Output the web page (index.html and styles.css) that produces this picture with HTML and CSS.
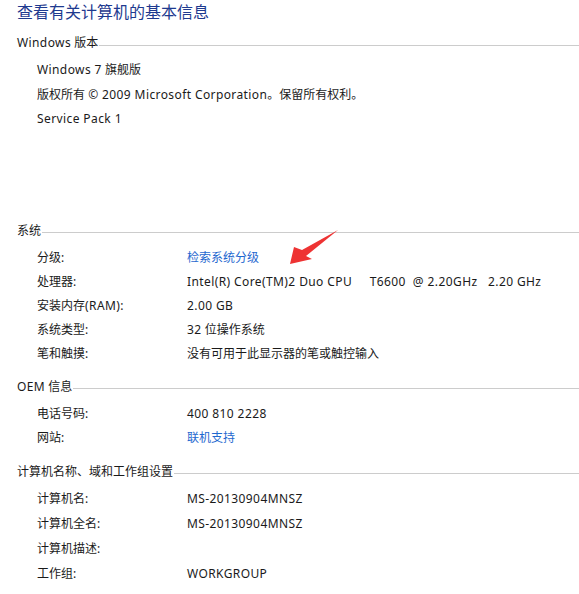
FILE: index.html
```html
<!DOCTYPE html>
<html lang="zh-CN">
<head>
<meta charset="utf-8">
<title>查看有关计算机的基本信息</title>
<link rel="stylesheet" href="styles.css">
</head>
<body>
<div class="page">
  <h1 class="title">查看有关计算机的基本信息</h1>

  <section class="sec sec-win">
    <div class="sec-head"><span class="sec-name"><span class="en">Windows</span> 版本</span><span class="rule"></span></div>
    <div class="rows">
      <div class="row"><span class="plain"><span class="en">Windows 7</span> 旗舰版</span></div>
      <div class="row"><span class="plain">版权所有 <span class="en">© 2009 Microsoft Corporation</span>。保留所有权利。</span></div>
      <div class="row"><span class="plain en">Service Pack 1</span></div>
    </div>
  </section>

  <section class="sec sec-sys">
    <div class="sec-head"><span class="sec-name">系统</span><span class="rule"></span></div>
    <div class="rows">
      <div class="row"><span class="label">分级:</span><a class="value link">检索系统分级</a></div>
      <div class="row"><span class="label">处理器:</span><span class="value pre en">Intel(R) Core(TM)2 Duo CPU     T6600  @ 2.20GHz   2.20 GHz</span></div>
      <div class="row"><span class="label">安装内存<span class="en">(RAM)</span>:</span><span class="value en">2.00 GB</span></div>
      <div class="row"><span class="label">系统类型:</span><span class="value"><span class="en">32</span> 位操作系统</span></div>
      <div class="row"><span class="label">笔和触摸:</span><span class="value">没有可用于此显示器的笔或触控输入</span></div>
    </div>
  </section>

  <section class="sec sec-oem">
    <div class="sec-head"><span class="sec-name"><span class="en">OEM</span> 信息</span><span class="rule"></span></div>
    <div class="rows">
      <div class="row"><span class="label">电话号码:</span><span class="value en">400 810 2228</span></div>
      <div class="row"><span class="label">网站:</span><a class="value link">联机支持</a></div>
    </div>
  </section>

  <section class="sec sec-name-grp">
    <div class="sec-head"><span class="sec-name">计算机名称、域和工作组设置</span><span class="rule"></span></div>
    <div class="rows rows-wide">
      <div class="row"><span class="label">计算机名:</span><span class="value en">MS-20130904MNSZ</span></div>
      <div class="row"><span class="label">计算机全名:</span><span class="value en">MS-20130904MNSZ</span></div>
      <div class="row"><span class="label">计算机描述:</span><span class="value"></span></div>
      <div class="row"><span class="label">工作组:</span><span class="value en">WORKGROUP</span></div>
    </div>
  </section>

  <svg class="arrow" width="60" height="45" viewBox="280 226 60 45" aria-hidden="true">
    <polygon points="290,264 294,247 302,250 338,230 306,256 312,259" fill="#ee3333"/>
  </svg>
</div>
</body>
</html>
```

FILE: styles.css
```css
html, body {
  margin: 0;
  padding: 0;
  background: #ffffff;
}

body {
  font-family: "Noto Sans", "Noto Sans CJK SC", sans-serif;
  font-size: 12px;
  color: #1a1a1a;
}

.page {
  position: relative;
  width: 579px;
  padding-left: 17px;
  box-sizing: border-box;
}

.title {
  margin: 0;
  font-family: "Noto Sans CJK SC", sans-serif;
  font-size: 16px;
  font-weight: normal;
  line-height: 23px;
  color: #1e3a8f;
}

.en {
  letter-spacing: 0.4px;
}

.sec-head {
  display: flex;
  align-items: center;
  height: 20px;
  line-height: 20px;
}

.sec-name {
  white-space: nowrap;
  color: #1a1a1a;
}

.rule {
  flex: 1;
  margin-left: 1px;
  margin-top: 4px;
  border-top: 1px solid #cccccc;
}

.rows {
  padding-left: 20px;
}

.row {
  display: flex;
  height: 24px;
  line-height: 24px;
  white-space: nowrap;
}

.rows-wide .row {
  height: 25px;
  line-height: 25px;
}

.label {
  width: 150px;
  flex: none;
}

.value {
  flex: none;
}

.pre {
  white-space: pre;
}

.link {
  color: #1f68cf;
  text-decoration: none;
}

.sec-win {
  margin-top: 10px;
}
.sec-win .rows {
  margin-top: 5px;
}
.sec-win .row {
  height: 24.5px;
  line-height: 24.5px;
}

.sec-sys {
  margin-top: 89px;
}
.sec-sys .rows {
  margin-top: 5px;
}

.sec-oem {
  margin-top: 11px;
}
.sec-oem .rows {
  margin-top: 5px;
}

.sec-name-grp {
  margin-top: 12px;
}
.sec-name-grp .rows {
  margin-top: 4px;
}

.arrow {
  position: absolute;
  left: 280px;
  top: 226px;
}
```
